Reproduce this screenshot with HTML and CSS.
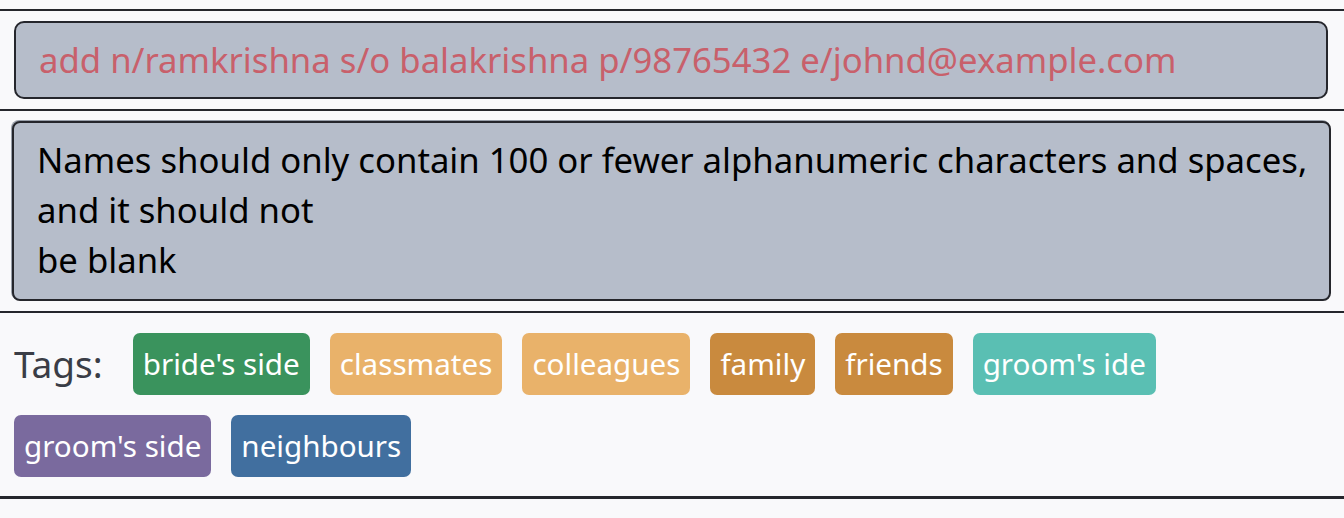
FILE: index.html
```html
<!DOCTYPE html>
<html>
<head>
<meta charset="utf-8">
<link rel="stylesheet" href="styles.css">
</head>
<body>
<div class="page">
  <section class="command-bar">
    <div class="command-input">add n/ramkrishna s/o balakrishna p/98765432 e/johnd@example.com</div>
  </section>
  <section class="result-bar">
    <div class="result-box">Names should only contain 100 or fewer alphanumeric characters and spaces,<br>and it should not<br>be blank</div>
  </section>
  <section class="tags-bar">
    <span class="tags-label">Tags:</span>
    <span class="tag green">bride's side</span>
    <span class="tag light-orange">classmates</span>
    <span class="tag light-orange">colleagues</span>
    <span class="tag orange">family</span>
    <span class="tag orange">friends</span>
    <span class="tag teal">groom's ide</span>
    <span class="tag purple">groom's side</span>
    <span class="tag blue">neighbours</span>
  </section>
</div>
</body>
</html>
```
FILE: styles.css
```css
html, body {
  margin: 0;
  padding: 0;
  background: #f9f9fb;
  font-family: "Noto Sans", "Open Sans", sans-serif;
}
.page {
  padding-top: 9px;
}
.command-bar {
  border-top: 2px solid #25262c;
  padding: 10px 16px 10px 14px;
}
.command-input {
  box-sizing: border-box;
  height: 78px;
  border: 2px solid #25262c;
  border-radius: 10px;
  background: #b6bdca;
  color: #c8606b;
  font-size: 34.7px;
  line-height: 74px;
  padding-left: 23px;
  white-space: nowrap;
}
.result-bar {
  border-top: 2px solid #25262c;
  padding: 10px 13px 10px 12px;
}
.result-box {
  box-sizing: border-box;
  height: 180px;
  border: 2px solid #25262c;
  border-radius: 8px;
  box-shadow: -1px -1px 0 #9aa0aa;
  background: #b6bdca;
  color: #000;
  font-size: 34.7px;
  line-height: 50px;
  padding: 12px 0 0 23px;
  white-space: nowrap;
}
.tags-bar {
  border-top: 2px solid #25262c;
  border-bottom: 3px solid #25262c;
  padding: 20px 14px 19px 14px;
  display: flex;
  flex-wrap: wrap;
  align-items: center;
  column-gap: 20px;
  row-gap: 20px;
}
.tags-label {
  font-size: 37px;
  color: #3a3d46;
  margin-right: 10px;
  line-height: 62px;
}
.tag {
  height: 62px;
  box-sizing: border-box;
  padding: 0 10px;
  border-radius: 7px;
  color: #fff;
  font-size: 29.6px;
  line-height: 62px;
  white-space: nowrap;
}
.green { background: #3a935d; }
.light-orange { background: #e9b26a; }
.orange { background: #c98a3e; }
.teal { background: #5abfb3; }
.purple { background: #7a6a9e; }
.blue { background: #416f9f; }
```
